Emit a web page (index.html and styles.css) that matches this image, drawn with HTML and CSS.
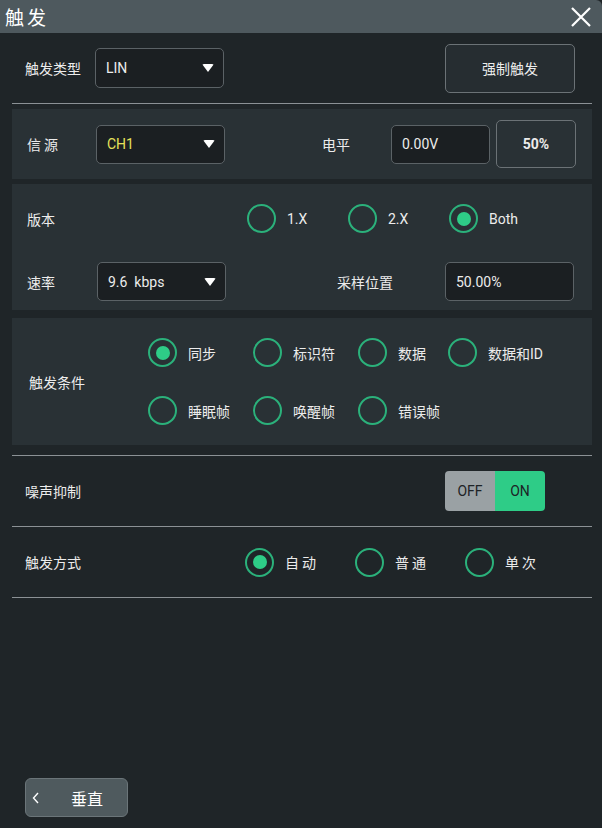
FILE: index.html
```html
<!DOCTYPE html>
<html lang="zh">
  <head>
    <meta charset="UTF-8" />
    <meta name="viewport" content="width=device-width, initial-scale=1.0" />
    <title>触发</title>
    <link rel="stylesheet" href="styles.css">
  </head>
  <body>
    <div id="dialog">
      <div class="header">
        <span class="title">触发</span>
        <svg class="close" width="20" height="20" viewBox="0 0 20 20">
          <path d="M1 1 L19 19 M19 1 L1 19" stroke="#fff" stroke-width="2.2" fill="none" />
        </svg>
      </div>

      <div class="content">
        <div class="row topRow">
          <span class="label w71">触发类型</span>
          <div class="select w129">LIN<i class="arrow"></i></div>
          <button class="btn forceBtn">强制触发</button>
        </div>
        <div class="divider"></div>

        <div class="panel sourcePanel">
          <span class="label w69 spaced">信源</span>
          <div class="select w129 yellow">CH1<i class="arrow"></i></div>
          <span class="label levelLabel">电平</span>
          <div class="input w99">0.00V</div>
          <button class="btn halfBtn">50%</button>
        </div>

        <div class="panel versionPanel">
          <div class="subRow">
            <span class="label w220">版本</span>
            <div class="radios cols101">
              <div class="radio"><span class="circle"></span>1.X</div>
              <div class="radio"><span class="circle"></span>2.X</div>
              <div class="radio"><span class="circle on"></span>Both</div>
            </div>
          </div>
          <div class="subRow">
            <span class="label w70">速率</span>
            <div class="select w129">9.6&nbsp; kbps<i class="arrow"></i></div>
            <span class="label sampleLabel">采样位置</span>
            <div class="input w129">50.00%</div>
          </div>
        </div>

        <div class="panel condPanel">
          <span class="label w119">触发条件</span>
          <div class="condGrid">
            <div class="radio"><span class="circle on"></span>同步</div>
            <div class="radio"><span class="circle"></span>标识符</div>
            <div class="radio"><span class="circle"></span>数据</div>
            <div class="radio"><span class="circle"></span>数据和ID</div>
            <div class="radio"><span class="circle"></span>睡眠帧</div>
            <div class="radio"><span class="circle"></span>唤醒帧</div>
            <div class="radio"><span class="circle"></span>错误帧</div>
          </div>
        </div>

        <div class="divider gapTop"></div>
        <div class="row">
          <span class="label w420">噪声抑制</span>
          <div class="toggle">
            <span class="off">OFF</span>
            <span class="onPart">ON</span>
          </div>
        </div>
        <div class="divider"></div>
        <div class="row">
          <span class="label w220">触发方式</span>
          <div class="radios cols110">
            <div class="radio spaced"><span class="circle on"></span>自动</div>
            <div class="radio spaced"><span class="circle"></span>普通</div>
            <div class="radio spaced"><span class="circle"></span>单次</div>
          </div>
        </div>
        <div class="divider"></div>
      </div>

      <div class="footer">
        <button class="backBtn">
          <svg class="chev" width="7" height="12" viewBox="0 0 7 12">
            <path d="M6 1 L1.5 6 L6 11" stroke="#fff" stroke-width="1.4" fill="none" />
          </svg>
          <span>垂直</span>
        </button>
      </div>
    </div>
  </body>
</html>
```

FILE: styles.css
```css
body {
  margin: 0;
  background-color: #1f2528;
  font-family: Roboto, "Noto Sans CJK SC", sans-serif;
  color: #ececec;
}
#dialog {
  width: 602px;
  height: 828px;
  display: flex;
  flex-direction: column;
  overflow: hidden;
}
.header {
  height: 33px;
  background-color: #4e595e;
  display: flex;
  align-items: center;
  justify-content: space-between;
  padding: 0 11px 0 5px;
  border-top-right-radius: 6px;
}
.title {
  font-family: "Noto Sans CJK SC", sans-serif;
  font-size: 19px;
  letter-spacing: 3px;
  color: #fff;
}
.close {
  display: block;
}
.content {
  padding: 0 10px 0 12px;
}
.row {
  height: 70px;
  display: flex;
  align-items: center;
  padding-left: 13px;
}
.divider {
  height: 1px;
  background-color: #8b9195;
}
.gapTop {
  margin-top: 10px;
}
.label {
  font-size: 14px;
  flex-shrink: 0;
  white-space: nowrap;
}
.spaced {
  letter-spacing: 3px;
}
.w69 { width: 69px; }
.w70 { width: 70px; }
.w71 { width: 70px; }
.w119 { width: 119px; }
.w220 { width: 220px; }
.w420 { width: 420px; }
.w99 { width: 99px; }
.w129 { width: 129px; }

.select,
.input {
  box-sizing: border-box;
  height: 39px;
  background-color: #1b1f22;
  border: 1px solid #5b6266;
  border-radius: 5px;
  display: flex;
  align-items: center;
  padding-left: 10px;
  font-size: 14px;
  flex-shrink: 0;
}
.select {
  justify-content: space-between;
  padding-right: 9px;
}
.yellow {
  color: #e6e25a;
}
.arrow {
  width: 0;
  height: 0;
  border-left: 6px solid transparent;
  border-right: 6px solid transparent;
  border-top: 8px solid #fff;
  border-radius: 2px;
}
.btn {
  box-sizing: border-box;
  background-color: #262d31;
  border: 1px solid #6b7276;
  border-radius: 5px;
  color: #ececec;
  font-family: Roboto, "Noto Sans CJK SC", sans-serif;
  font-size: 14px;
}
.forceBtn {
  width: 130px;
  height: 49px;
  margin-left: auto;
  margin-right: 17px;
}
.topRow .select {
  height: 40px;
}

.panel {
  background-color: #293135;
}
.sourcePanel {
  margin-top: 5px;
  height: 70px;
  display: flex;
  align-items: center;
  padding-left: 15px;
}
.levelLabel {
  margin-left: 97px;
  width: 69px;
}
.halfBtn {
  width: 80px;
  height: 48px;
  margin-left: 6px;
  background-color: #293135;
  font-weight: bold;
}

.versionPanel {
  margin-top: 5px;
  padding: 15px 0 9px 15px;
  display: flex;
  flex-direction: column;
  gap: 24px;
}
.subRow {
  display: flex;
  align-items: center;
  height: 39px;
}
.sampleLabel {
  width: 108px;
  margin-left: 111px;
}

.radios {
  display: grid;
}
.cols101 {
  grid-template-columns: 101px 101px 101px;
}
.cols110 {
  grid-template-columns: 110px 110px 110px;
}
.radio {
  display: flex;
  align-items: center;
  gap: 11px;
  font-size: 14px;
  white-space: nowrap;
}
.circle {
  box-sizing: border-box;
  width: 29px;
  height: 29px;
  border: 2.5px solid #2bb17b;
  border-radius: 50%;
  display: flex;
  align-items: center;
  justify-content: center;
  flex-shrink: 0;
}
.circle.on::after {
  content: "";
  width: 14px;
  height: 14px;
  border-radius: 50%;
  background-color: #2ecc87;
}

.condPanel {
  margin-top: 8px;
  height: 127px;
  display: flex;
  align-items: center;
  padding-left: 17px;
  box-sizing: border-box;
}
.condGrid {
  display: grid;
  grid-template-columns: 105px 105px 90px auto;
  row-gap: 29px;
}

.toggle {
  display: flex;
  width: 100px;
  height: 40px;
  border-radius: 4px;
  overflow: hidden;
  font-size: 14px;
  color: #1d2326;
}
.toggle span {
  width: 50px;
  display: flex;
  align-items: center;
  justify-content: center;
}
.toggle .off {
  background-color: #9aa1a4;
}
.toggle .onPart {
  background-color: #2ecc87;
}

.footer {
  margin-top: auto;
  padding: 0 0 11px 25px;
}
.backBtn {
  box-sizing: border-box;
  width: 103px;
  height: 39px;
  background-color: #4f5a5e;
  border: 1px solid #6b7579;
  border-radius: 6px;
  color: #fff;
  font-family: "Noto Sans CJK SC", sans-serif;
  font-size: 16px;
  display: flex;
  align-items: center;
  padding: 0 0 0 6px;
}
.chev {
  display: block;
  margin-right: 32px;
}
```
